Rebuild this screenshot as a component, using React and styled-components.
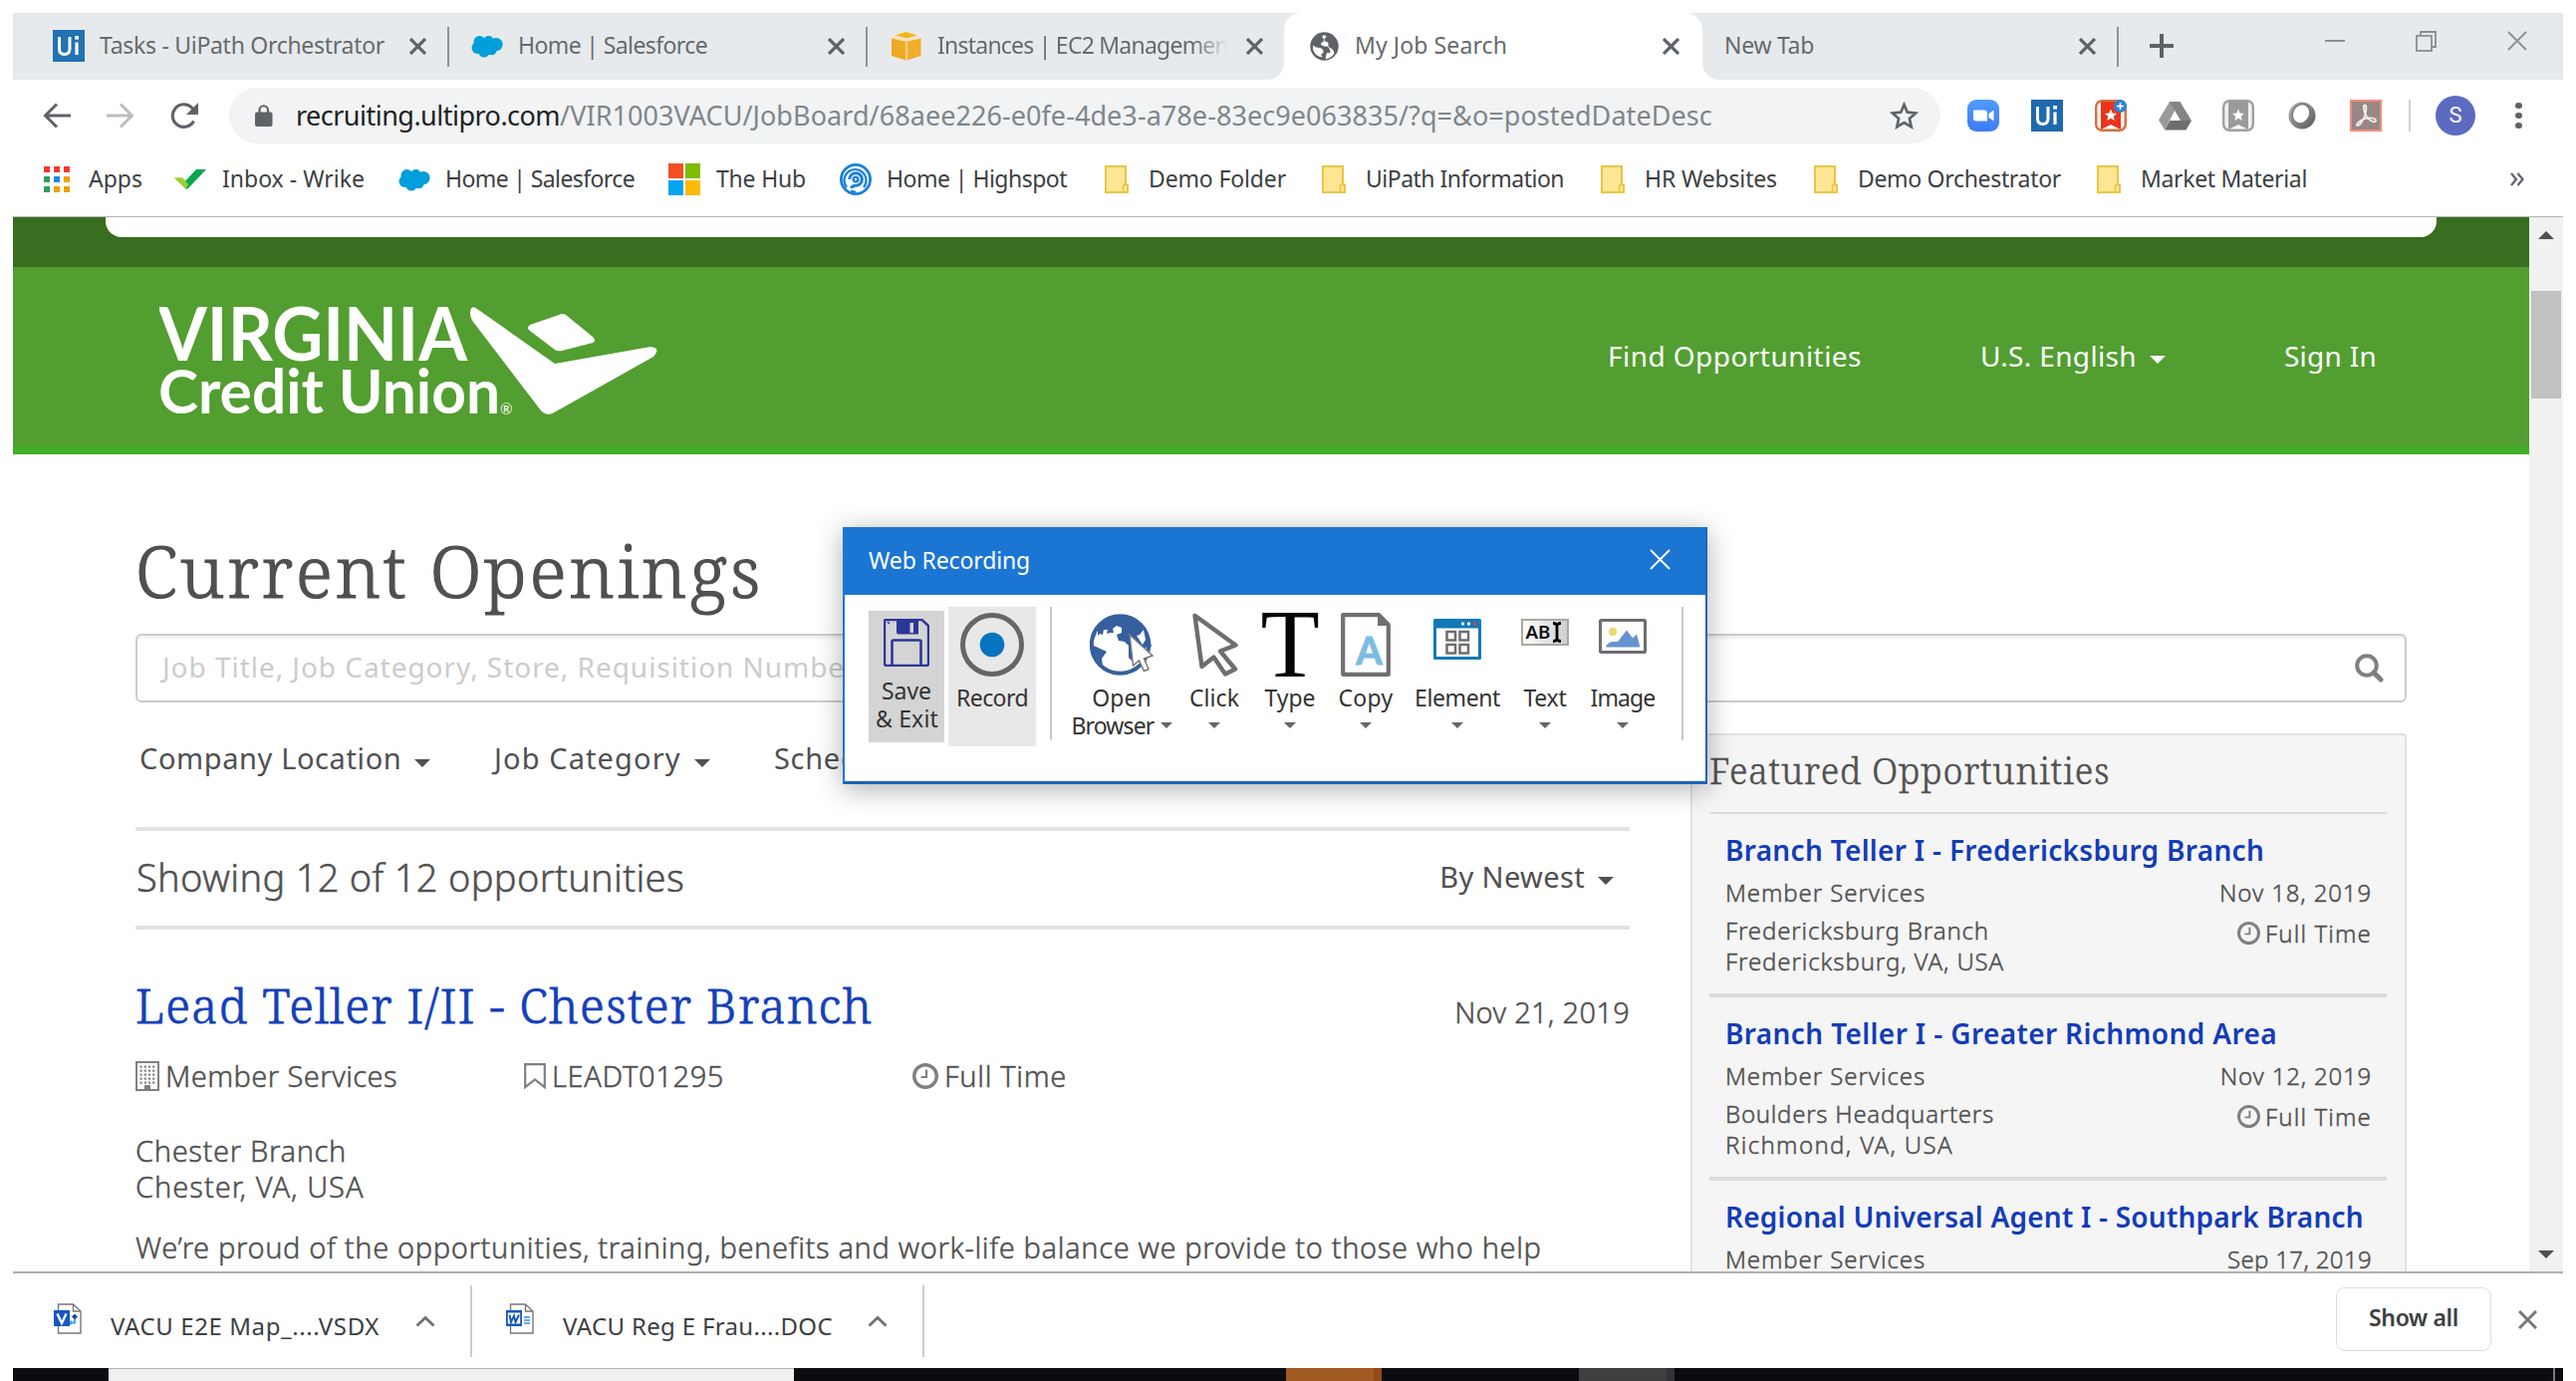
import React from 'react';
import styled, { createGlobalStyle, css } from 'styled-components';

const sans = '"Noto Sans", "Open Sans", sans-serif';
const slab = '"Noto Serif", "DejaVu Serif", serif';

const GlobalStyle = createGlobalStyle`
  *, *::before, *::after { box-sizing: border-box; }
  html, body { margin: 0; padding: 0; background: #fff; overflow: hidden; }
  svg { display: block; flex: none; }
`;

const Desktop = styled.div`
  position: relative;
  width: 2586px;
  height: 1386px;
  padding: 13px 13px 0;
  display: flex;
  flex-direction: column;
  overflow: hidden;
  background: #fff;
  font-family: ${sans};
  white-space: nowrap;
`;

const Label = styled.span`
  font-size: ${(p) => p.$size || 23}px;
  letter-spacing: ${(p) => p.$ls || 0}px;
`;

/* ---------- tab strip ---------- */

const TabStrip = styled.div`
  display: flex;
  height: 67px;
  flex: none;
`;

const TabGroup = styled.div`
  display: flex;
  background: #e6eaec;
  border-bottom-right-radius: ${(p) => (p.$side === 'left' ? 17 : 0)}px;
  border-bottom-left-radius: ${(p) => (p.$side === 'right' ? 17 : 0)}px;
  flex: ${(p) => (p.$side === 'right' ? 1 : 'none')};
`;

const TabBox = styled.div`
  display: flex;
  align-items: center;
  width: ${(p) => p.$width}px;
  padding: 0 ${(p) => p.$right}px 1px ${(p) => p.$left}px;
  color: #666a6d;
`;

const ActiveSlot = styled.div`
  background: #e6eaec;
  display: flex;
  > div {
    background: #fff;
    border-radius: 17px 17px 0 0;
  }
`;

const TabIcon = styled.div`
  width: 32px;
  display: flex;
  align-items: center;
  justify-content: center;
  margin-right: 15px;
`;

const TabTitle = styled(Label)`
  flex: 1;
  min-width: 0;
  overflow: hidden;
  padding-bottom: 2px;
  ${(p) =>
    p.$fade &&
    css`
      margin-right: 18px;
      mask-image: linear-gradient(to right, #000 88%, transparent 100%);
    `}
`;

const StripDivider = styled.div`
  width: 2px;
  height: 40px;
  margin: 14px 0 0 -2px;
  background: #8f9396;
  flex: none;
`;

const PlusSlot = styled.div`
  display: flex;
  align-items: center;
  padding: 0 0 1px 31px;
  flex: 1;
`;

const WindowControls = styled.div`
  display: flex;
  align-items: center;
  gap: 71px;
  padding: 0 36px 11px 0;
`;

/* ---------- address bar ---------- */

const Toolbar = styled.div`
  display: flex;
  align-items: center;
  height: 72px;
  flex: none;
  padding-left: 30px;
`;

const NavButtons = styled.div`
  display: flex;
  gap: 36px;
  width: 187px;
`;

const Omnibox = styled.div`
  display: flex;
  align-items: center;
  width: 1718px;
  height: 56px;
  border-radius: 28px;
  background: #f1f3f4;
  padding: 0 22px 0 26px;
`;

const Url = styled.div`
  flex: 1;
  margin-left: 23px;
  color: #80868b;
  padding-bottom: 1px;
`;

const Host = styled(Label)`
  color: #202124;
`;

const Extensions = styled.div`
  display: flex;
  align-items: center;
  gap: 32px;
  margin-left: 27px;
`;

const ExtSlot = styled.div`
  width: 32px;
  display: flex;
  justify-content: center;
`;

const ToolbarDivider = styled.div`
  width: 2px;
  height: 32px;
  margin: 0 25px 0 27px;
  background: #cfd1d3;
`;

const Avatar = styled.div`
  width: 40px;
  height: 40px;
  border-radius: 50%;
  background: #5c6bc0;
  color: #fff;
  font: 400 22px/40px Roboto, sans-serif;
  text-align: center;
`;

const MenuDots = styled.div`
  display: grid;
  gap: 3.4px;
  margin-left: 40px;
  i {
    width: 6.6px;
    height: 6.6px;
    border-radius: 50%;
    background: #5f6368;
  }
`;

/* ---------- bookmarks ---------- */

const BookmarkBar = styled.div`
  display: flex;
  align-items: flex-start;
  height: 66px;
  flex: none;
  padding-left: 31px;
  border-bottom: 1px solid #b4b4b4;
`;

const Bookmark = styled.div`
  display: flex;
  align-items: center;
  height: 56px;
  width: ${(p) => p.$slot}px;
  gap: ${(p) => p.$gap}px;
  color: #3c4043;
  ${Label} {
    padding-bottom: 2px;
  }
`;

const Overflow = styled.div`
  display: flex;
  align-items: center;
  height: 56px;
  margin-left: auto;
  padding-right: 39px;
`;

/* ---------- page ---------- */

const Viewport = styled.div`
  display: flex;
  height: 1058px;
  flex: none;
  overflow: hidden;
`;

const Page = styled.div`
  width: 2526px;
  flex: none;
`;

const DarkBand = styled.div`
  height: 50px;
  background: #396e20;
  padding-left: 93px;
`;

const BandCard = styled.div`
  width: 2340px;
  height: 20px;
  background: #fff;
  border-radius: 0 0 16px 16px;
`;

const SiteHeader = styled.header`
  display: flex;
  align-items: center;
  justify-content: space-between;
  height: 188px;
  padding: 0 153px 0 147px;
  background: #529e30;
  border-bottom: 8px solid #41ae2b;
  > svg { margin-top: 8px; }
`;

const SiteNav = styled.nav`
  display: flex;
  align-items: center;
  gap: 119px;
  color: #fff;
  padding-bottom: 3px;
`;

const DropLabel = styled.div`
  display: flex;
  align-items: center;
  gap: ${(p) => p.$gap || 13}px;
`;

const Triangle = styled.i`
  width: 0;
  height: 0;
  border: solid transparent;
  border-width: ${(p) => p.$h || 8}px ${(p) => (p.$w || 16) / 2}px 0;
  border-top-color: ${(p) => p.$color || '#505050'};
  margin-top: ${(p) => (p.$drop === undefined ? 9 : p.$drop)}px;
`;

const Main = styled.main`
  padding: 60px 123px 0;
`;

const PageTitle = styled.h1`
  margin: 0;
  height: 120px;
  font: 300 72px/113px ${slab};
  letter-spacing: 2.65px;
  color: #505050;
  -webkit-text-stroke: 1.2px #505050;
`;

const SearchBox = styled.div`
  display: flex;
  align-items: center;
  justify-content: space-between;
  height: 69px;
  padding: 0 21px 0 25px;
  border: 2px solid #ccc;
  border-radius: 6px;
  box-shadow: inset 0 3px 3px rgba(0, 0, 0, 0.06);
  color: #ccc;
  ${Label} {
    padding-bottom: 3px;
  }
`;

const Columns = styled.div`
  display: flex;
  gap: 61px;
  align-items: flex-start;
`;

const Listing = styled.section`
  width: 1500px;
  color: #505050;
`;

const Filters = styled.div`
  display: flex;
  height: 125px;
  padding: 40px 0 0 4px;
  line-height: 32px;
  align-items: flex-start;
`;

const Filter = styled(DropLabel)`
  width: ${(p) => p.$slot}px;
`;

const ResultBar = styled.div`
  display: flex;
  align-items: center;
  justify-content: space-between;
  height: 103px;
  padding: 0 16px 4px 1px;
  border: solid #e2e2e2;
  border-width: 4px 0;
`;

const LightText = styled(Label)`
  font-weight: 300;
  -webkit-text-stroke: 0.45px currentColor;
`;

const JobHead = styled.div`
  display: flex;
  align-items: baseline;
  justify-content: space-between;
  margin-top: 53px;
  height: 46px;
  line-height: 46px;
`;

const JobTitle = styled.a`
  font: 300 48px/46px ${slab};
  letter-spacing: 1.33px;
  color: #133fb9;
  -webkit-text-stroke: 0.8px #133fb9;
`;

const MetaRow = styled.div`
  display: grid;
  grid-template-columns: 390px 390px 1fr;
  margin-top: 32px;
  height: 32px;
  line-height: 32px;
`;

const Meta = styled.div`
  display: flex;
  align-items: center;
  gap: 6px;
`;

const Place = styled.div`
  display: flex;
  flex-direction: column;
  margin-top: 41px;
  line-height: 36px;
`;

const Summary = styled.p`
  display: flex;
  margin: 25px 0 0;
  line-height: 36px;
`;

/* ---------- featured ---------- */

const Featured = styled.aside`
  width: 719px;
  height: 600px;
  margin-top: 31px;
  padding: 0 18px 0 17px;
  background: #f5f5f5;
  border: 2px solid #e2e2e2;
  border-radius: 4px;
  color: #505050;
`;

const FeaturedTitle = styled.h2`
  margin: 0;
  height: 79px;
  font: 300 36px/72px ${slab};
  letter-spacing: 0.8px;
  -webkit-text-stroke: 0.5px #505050;
  border-bottom: 2px solid #dcdcdc;
`;

const FeaturedJob = styled.article`
  height: 184px;
  padding: 19px 15px 0 16px;
  border-bottom: 4px solid #dcdcdc;
`;

const FeaturedLink = styled.a`
  display: block;
  font-size: 28px;
  font-weight: 600;
  line-height: 34px;
  letter-spacing: ${(p) => p.$ls}px;
  color: #133cb8;
`;

const FeaturedRow = styled.div`
  display: flex;
  justify-content: space-between;
  line-height: ${(p) => (p.$tall ? 31 : 32)}px;
  margin-top: ${(p) => (p.$tall ? 6 : 10)}px;
`;

const FeaturedPlace = styled.div`
  display: flex;
  flex-direction: column;
`;

const FeaturedTime = styled.div`
  display: flex;
  align-items: center;
  gap: 5px;
  height: 31px;
  margin-top: 3px;
`;

/* ---------- scrollbar ---------- */

const Scrollbar = styled.div`
  display: flex;
  flex-direction: column;
  align-items: center;
  width: 34px;
  background: #f1f1f1;
  padding: 14px 0 13px;
`;

const ScrollArrow = styled.i`
  border: solid transparent;
  border-width: ${(p) => (p.$up ? '0 8px 8px' : '8px 8px 0')};
  border-bottom-color: ${(p) => (p.$up ? '#505050' : 'transparent')};
  border-top-color: ${(p) => (p.$up ? 'transparent' : '#505050')};
`;

const Thumb = styled.div`
  width: 30px;
  height: 108px;
  margin: 52px 0 auto;
  background: #c1c1c1;
`;

/* ---------- downloads ---------- */

const DownloadBar = styled.div`
  display: flex;
  align-items: center;
  height: 97px;
  flex: none;
  border-top: 2px solid #b1b0b2;
`;

const Download = styled.div`
  display: flex;
  align-items: center;
  width: ${(p) => p.$width}px;
  height: 72px;
  padding: 0 35px 0 ${(p) => p.$left}px;
  border-right: 2px solid #cccccc;
  color: #3c4043;
  ${Label} {
    flex: 1;
    margin-left: 29px;
    padding-top: 9px;
  }
`;

const FileIcon = styled.div`
  margin-top: -4px;
`;

const ShowAll = styled.button`
  width: 156px;
  height: 64px;
  margin: 0 27px 3px auto;
  padding: 0 0 3px;
  background: #fff;
  border: 1.5px solid #dadce0;
  border-radius: 9px;
  font: 600 23px/1 ${sans};
  letter-spacing: -0.33px;
  color: #3c4043;
`;

const BarClose = styled.div`
  padding: 0 26px 3px 0;
`;

const Taskbar = styled.div`
  display: flex;
  height: 13px;
  flex: none;
  background: #0a0c10;
`;

const TaskItem = styled.div`
  width: ${(p) => p.$width}px;
  margin-left: ${(p) => p.$gap}px;
  background: ${(p) => p.$bg};
  border-right: ${(p) => p.$edge || 'none'};
  border-top: ${(p) => p.$top || 'none'};
`;

/* ---------- recorder dialog ---------- */

const Dialog = styled.div`
  position: absolute;
  left: 846px;
  top: 529px;
  width: 868px;
  height: 258px;
  background: #fff;
  border: 2px solid #1766ba;
  border-left-color: #1b76d3;
  border-top-color: #1b76d3;
  border-bottom-width: 3px;
  box-shadow: 0 5px 26px rgba(0, 0, 0, 0.32);
`;

const DialogBar = styled.div`
  display: flex;
  align-items: center;
  justify-content: space-between;
  height: 66px;
  padding: 0 35px 5px 24px;
  background: #1b76d3;
  color: #fff;
`;

const Tools = styled.div`
  display: flex;
  align-items: flex-start;
  padding: 12px 0 0 24px;
  color: #333;
`;

const Tool = styled.div`
  display: flex;
  flex-direction: column;
  align-items: center;
  width: ${(p) => p.$width}px;
  padding-top: 6px;
  line-height: 28px;
`;

const RecordTool = styled(Tool)`
  height: 140px;
  background: #e8e8e8;
`;

const SaveTool = styled(Tool)`
  height: 132px;
  margin: 4px 4px 0 0;
  padding-top: 8px;
  background: #d4d4d4;
  svg { margin-bottom: 10px; }
  span + span { margin-left: 1px; }
`;

const ToolIcon = styled.div`
  height: 71px;
  padding-top: ${(p) => (p.$small ? 6 : 0)}px;
`;

const ToolArrow = styled.div`
  display: flex;
  align-items: center;
  gap: 6px;
  height: 28px;
`;

const ToolDivider = styled.div`
  width: 2px;
  height: 134px;
  margin: 0 ${(p) => p.$after || 0}px 0 ${(p) => p.$before}px;
  background: #c8c8c8;
`;

/* ---------- icons ---------- */

const Cross = ({ size = 17, w = 3.2, color = '#5f6368' }) => (
  <svg width={size} height={size} viewBox={`0 0 ${size} ${size}`}>
    <path d={`M1 1L${size - 1} ${size - 1}M${size - 1} 1L1 ${size - 1}`} stroke={color} strokeWidth={w} fill="none" />
  </svg>
);

const UiIcon = ({ bg = '#2272b4' }) => (
  <svg width="32" height="32" viewBox="0 0 32 32">
    <rect width="32" height="32" fill={bg} />
    <path d="M6.5 7v12q0 5.5 5.2 5.5T17 19V7" fill="none" stroke="#fff" strokeWidth="3" />
    <path d="M24 12.5v12.5" stroke="#fff" strokeWidth="3.2" />
    <rect x="22.2" y="6" width="3.8" height="3.6" fill="#fff" />
  </svg>
);

const Cloud = () => (
  <svg width="32" height="23" viewBox="0 0 32 23">
    <g fill="#009edb">
      <circle cx="8.5" cy="7" r="6" />
      <circle cx="17.5" cy="6" r="5" />
      <circle cx="25" cy="9.5" r="6.6" />
      <circle cx="6.5" cy="13" r="6" />
      <circle cx="13" cy="17" r="5.6" />
      <circle cx="20.5" cy="15" r="5.2" />
      <rect x="8" y="6" width="14" height="10" />
    </g>
  </svg>
);

const Cube = () => (
  <svg width="30" height="29" viewBox="0 0 30 29">
    <path d="M0 6L14.5 9v19.5L0 24z" fill="#efa922" />
    <path d="M29.5 6L15.5 9v19.5L29.5 24z" fill="#f0ae2b" />
    <path d="M4 3.5L14.5 0 26 3.5 15 6.5z" fill="#f7b50c" />
    <path d="M0 5.5L15 9l14.5-3.5" fill="none" stroke="#f8e2b4" strokeWidth="2" />
    <path d="M15 9v19.5" stroke="#f5cf85" strokeWidth="2.4" />
  </svg>
);

const Globe = () => (
  <svg width="29" height="29" viewBox="0 0 29 29">
    <circle cx="14.5" cy="14.5" r="14.2" fill="#5f6368" />
    <path d="M3 13.500q3 2.500 7 2.500 3 .5 3.500 3t-1.500 3 1 3.500q-8-.500-10-8.500z" fill="#fff" />
    <path d="M13 3.500q-1.500 2.500 1 3.500t-1 3 -1 3.500 4.500 1 3.500 3.500-1 3-3 3.500-.500 3q5-1 7.500-4 2-1.500 1-4t-3.500-3.500-2-3.500-3-3 0-3.500-3.500-2.500z" fill="#fff" />
  </svg>
);

const Arrow = ({ color, flip }) => (
  <svg width="28" height="26" viewBox="0 0 28 26">
    <path
      d={flip ? 'M0 13h25M14 1.500L25.500 13 14 24.500' : 'M28 13H3M14 1.500L2.500 13 14 24.500'}
      fill="none" stroke={color} strokeWidth="3"
    />
  </svg>
);

const Reload = () => (
  <svg width="28" height="26" viewBox="0 0 28 26">
    <path d="M23.500 18.500A11.300 11.300 0 1 1 21.500 5l3 3" fill="none" stroke="#5f6368" strokeWidth="3.100" />
    <path d="M28 0v12H16z" fill="#5f6368" />
  </svg>
);

const Lock = () => (
  <svg width="18" height="22" viewBox="0 0 18 22">
    <rect y="7.500" width="17.500" height="14.500" rx="2" fill="#5f6368" />
    <path d="M4.500 9V5.500a4.200 4.200 0 0 1 8.500 0V9" fill="none" stroke="#5f6368" strokeWidth="2.200" />
  </svg>
);

const Star = () => (
  <svg width="29" height="28" viewBox="0 0 29 28">
    <path d="M14.500 3l3.300 7.700 8.400.8-6.300 5.600 1.800 8.200-7.200-4.300-7.200 4.300 1.800-8.200-6.300-5.600 8.400-.8z" fill="none" stroke="#5f6368" strokeWidth="2.700" />
  </svg>
);

const ZoomIcon = () => (
  <svg width="32" height="32" viewBox="0 0 32 32">
    <defs>
      <linearGradient id="zoomBg" x1="0" y1="0" x2="0" y2="1"><stop offset="0" stopColor="#4f9cff" /><stop offset="1" stopColor="#3f7cf6" /></linearGradient>
    </defs>
    <rect width="32" height="32" rx="9" fill="url(#zoomBg)" />
    <path d="M6 10.500h11q3 0 3 3V21.500H9q-3 0-3-3z" fill="#fff" />
    <path d="M21.500 14l5-3.500v11l-5-3.500z" fill="#fff" />
  </svg>
);

const ListIcon = ({ body, edge, badge }) => (
  <svg width="32" height="32" viewBox="0 0 32 32">
    <rect x="1.200" y="1.200" width="29.600" height="29.600" rx="6" fill="#f7f1ec" stroke={edge} strokeWidth="2.400" />
    <path d="M6 2h20v28l-10-5-10 5z" fill={body} />
    <path d="M10 29l6-2.800 6 2.800z" fill="#fff" />
    <path d="M16 9.500l1.700 4 4.300.4-3.200 2.900.9 4.200-3.700-2.200-3.700 2.200.9-4.200L10 13.900l4.300-.4z" fill="#fff" />
    {badge && (
      <g>
        <circle cx="25.500" cy="6.500" r="6.500" fill="#2b83d8" />
        <path d="M22 6.500h7M25.500 3v7" stroke="#fff" strokeWidth="1.600" />
      </g>
    )}
  </svg>
);

const Drive = () => (
  <svg width="33" height="29" viewBox="0 0 33 29">
    <path d="M11 0h10.500L16 9.500 6 28 0 18.500z" fill="#9a9a9a" />
    <path d="M11 0h10.500l11.500 19H22z" fill="#858585" />
    <path d="M11.200 19H33l-5.500 9.500H6z" fill="#6e6e6e" />
    <path d="M16.500 10.500l5 8.500H11.500z" fill="#fff" />
  </svg>
);

const Ring = () => (
  <svg width="30" height="30" viewBox="0 0 30 30">
    <defs>
      <linearGradient id="ringFill" x1="0" y1="0" x2="1" y2="1"><stop offset="0" stopColor="#b8b8b8" /><stop offset="1" stopColor="#555" /></linearGradient>
    </defs>
    <circle cx="15" cy="15" r="13.500" fill="url(#ringFill)" />
    <ellipse cx="14.500" cy="13.500" rx="8" ry="9.500" fill="#fff" transform="rotate(25 14 13)" />
    <ellipse cx="14" cy="13" rx="8.500" ry="10" fill="none" stroke="#777" strokeWidth="1.200" transform="rotate(25 14 13)" />
  </svg>
);

const Pdf = () => (
  <svg width="32" height="32" viewBox="0 0 32 32">
    <rect x="1" y="1" width="30" height="30" fill="#978885" stroke="#f58a7c" strokeWidth="2" />
    <path d="M15 5.500c2 0 1.500 5 .5 9-1.500 6-6 12-8 11.500s2-5.500 8-7 11.500 0 10.500 2.500-7-1-9.500-5-3.500-11-1.500-11z" fill="none" stroke="#f4efee" strokeWidth="1.800" />
  </svg>
);

const AppsGrid = () => (
  <svg width="26" height="26" viewBox="0 0 26 26">
    {['#f23a30', '#f23a30', '#f23a30', '#2e9e58', '#1a86f2', '#f0a000', '#2e9e58', '#f0a000', '#f0a000'].map((c, i) => (
      <rect key={i} x={(i % 3) * 10} y={Math.floor(i / 3) * 10} width="6" height="6" fill={c} />
    ))}
  </svg>
);

const Check = () => (
  <svg width="32" height="20" viewBox="0 0 32 20">
    <path d="M0 8.500h8L16 15l-4 5z" fill="#9fcf36" />
    <path d="M22 0h10L13 20 9 14z" fill="#08a850" />
    <path d="M0 8.500h8l6 6.500-2.500 5z" fill="#9fcf36" />
  </svg>
);

const Squares = () => (
  <svg width="32" height="32" viewBox="0 0 32 32">
    <rect width="15" height="15" fill="#f35022" /><rect x="17" width="15" height="15" fill="#80bb02" />
    <rect y="17" width="15" height="15" fill="#05a5ef" /><rect x="17" y="17" width="15" height="15" fill="#ffba07" />
  </svg>
);

const Highspot = () => (
  <svg width="32" height="32" viewBox="0 0 32 32" fill="none" stroke="#1a80db">
    <circle cx="16" cy="16" r="14.600" strokeWidth="2.800" />
    <path d="M7 24A11 11 0 1 1 24 24M11 27.500q2.500 1.200 5 1.200" strokeWidth="2.200" />
    <path d="M9.800 16A6.300 6.300 0 1 1 16 22.300q-3.500 0-4.500 2.700" strokeWidth="3" />
    <circle cx="16" cy="16" r="2.400" strokeWidth="2.400" />
  </svg>
);

const Folder = () => (
  <svg width="24" height="28" viewBox="0 0 24 28">
    <path d="M1 1h20v18.500h2V27H1z" fill="#ffe694" stroke="#eac545" strokeWidth="2" />
    <path d="M18.500 26v-5q0-2 2.200-2" fill="none" stroke="#eac545" strokeWidth="1.600" />
  </svg>
);

const Logo = () => (
  <svg width="504" height="120" viewBox="0 0 504 120">
    <g fill="#fff" fontFamily="Lato, sans-serif" fontWeight="700">
      <text x="-1" y="60" fontSize="74" textLength="310" lengthAdjust="spacingAndGlyphs">VIRGINIA</text>
      <text x="-1" y="113" fontSize="61" textLength="343" lengthAdjust="spacingAndGlyphs">Credit Union</text>
      <text x="342" y="114" fontSize="15" fontWeight="400">®</text>
    </g>
    <path d="M312 13q0-10 7-5L397 63 493 46q11 1 3 10L398 111q-8 6-15-1L315 21q-3-4-3-8z" fill="#fff" />
    <path d="M372 24q-4 3 0 6l25 19q3 2 7 1l31-8q4-2 0-6l-27-22q-3-2-7 0z" fill="#fff" />
  </svg>
);

const Search = () => (
  <svg width="29" height="29" viewBox="0 0 29 29" fill="none" stroke="#808080">
    <circle cx="12" cy="12" r="9.800" strokeWidth="4" />
    <path d="M19 19l7 7" strokeWidth="5" strokeLinecap="round" />
  </svg>
);

const Building = () => (
  <svg width="24" height="30" viewBox="0 0 24 30">
    <rect x="1" y="1" width="22" height="28" fill="none" stroke="#808080" strokeWidth="2" />
    {[0, 1, 2, 3, 4].map((r) => [0, 1, 2, 3].map((c) => (
      <rect key={`${r}-${c}`} x={4.500 + c * 4.200} y={4.500 + r * 4} width="2.200" height="2.200" fill="#808080" />
    )))}
    <rect x="9" y="24" width="6" height="5" fill="#808080" />
  </svg>
);

const Ribbon = () => (
  <svg width="22" height="26" viewBox="0 0 22 26">
    <path d="M1.200 1.200h19.600v23L11 16.500 1.200 24.200z" fill="none" stroke="#808080" strokeWidth="2.200" />
  </svg>
);

const Clock = ({ size = 26 }) => (
  <svg width={size} height={size} viewBox="0 0 26 26" fill="none" stroke="#808080">
    <circle cx="13" cy="13" r="11.300" strokeWidth="3.400" />
    <path d="M14 6.500V14H8.500" strokeWidth="2.200" />
  </svg>
);

const VisioFile = () => (
  <svg width="28" height="31" viewBox="0 0 28 31">
    <path d="M4.500 1h15L27 8v22H4.500z" fill="#fff" stroke="#777" strokeWidth="1.400" />
    <path d="M19.500 1v7H27" fill="none" stroke="#777" strokeWidth="1.400" />
    <rect y="7" width="16" height="16" fill="#1757bd" />
    <path d="M3.500 10.500L8 20l4.500-9.500" fill="none" stroke="#fff" strokeWidth="2.400" />
    <path d="M21 10.500l3 3-3 3-3-3z" fill="#1747a5" />
    <path d="M21 16v3.500h-4M17 17.500v4" fill="none" stroke="#3a9af0" strokeWidth="1.800" />
  </svg>
);

const WordFile = () => (
  <svg width="28" height="31" viewBox="0 0 28 31">
    <path d="M4.500 1h15L27 8v22H4.500z" fill="#fff" stroke="#777" strokeWidth="1.400" />
    <path d="M19.500 1v7H27" fill="none" stroke="#777" strokeWidth="1.400" />
    <rect y="7" width="16" height="16" fill="#1757bd" />
    <rect x="1.800" y="9.500" width="12.400" height="11" fill="#fff" />
    <path d="M3.500 11.500l1.500 7.500 3-6.500 1.500 6.500 3.500-7.500" fill="none" stroke="#1757bd" strokeWidth="1.900" />
    <path d="M18 14h6M18 17h6M18 20h6" stroke="#2f8df0" strokeWidth="1.400" />
  </svg>
);

const Chevron = () => (
  <svg width="20" height="12" viewBox="0 0 20 12">
    <path d="M1.500 10.500L10 2.500l8.500 8" fill="none" stroke="#6f7478" strokeWidth="3" />
  </svg>
);

const Floppy = () => (
  <svg width="46" height="48" viewBox="0 0 46 48">
    <path d="M2.500 1h36L45 7v38q0 2-2 2H3q-2 0-2-2V2.500Q1 1 2.500 1z" fill="none" stroke="#2b3796" strokeWidth="2.400" />
    <path d="M13 1h22v14.500H15q-2 0-2-2z" fill="#2b3796" />
    <rect x="26.500" y="4" width="3.500" height="10" fill="#d4d4d4" />
    <path d="M8.500 47V23q0-1.500 1.500-1.500h26q1.500 0 1.500 1.500v24" fill="none" stroke="#2b3796" strokeWidth="2.600" />
    <path d="M4 3l2 2" stroke="#2b3796" strokeWidth="1.500" />
  </svg>
);

const RecordDot = () => (
  <svg width="64" height="64" viewBox="0 0 64 64">
    <circle cx="32" cy="32" r="29.500" fill="none" stroke="#666" strokeWidth="5" />
    <circle cx="32" cy="32" r="12.300" fill="#0774c2" />
  </svg>
);

const GlobeCursor = () => (
  <svg width="64" height="64" viewBox="0 0 64 64">
    <circle cx="30.500" cy="32" r="28.700" fill="#fff" stroke="#365f9f" strokeWidth="4" />
    <path d="M3 30L8 17v6l2-2 3 1 1-5 4 0-1 4 4-1 3 0-1-4 4-3 5 2 0 5-5 2 2 6 6 1 4 4 0 12 3 3 2-2 0-9 18-3Q58 4 30 3 6 6 3 30z" fill="#365f9f" />
    <path d="M47 23l3-1 4-5 2 10-3 5z" fill="#fff" />
    <path d="M4 33l13 6-5 7 1 7Q4 44 3 34z" fill="#365f9f" />
    <path d="M40 22l3.500 31 6-5 5 10.500 4.500-2-4.500-10.500 8.500-3z" fill="#fff" stroke="#777" strokeWidth="1.500" />
  </svg>
);

const Cursor = () => (
  <svg width="47" height="64" viewBox="0 0 47 64">
    <path d="M3.500 2.700L44.500 32.500 29 38.500l15 18L34 61.500 22.500 44.500 10.500 54z" fill="#fff" stroke="#6d6e71" strokeWidth="4.400" strokeLinejoin="round" />
  </svg>
);

const TypeGlyph = () => (
  <svg width="58" height="64" viewBox="0 0 58 64">
    <text x="29" y="63.500" textAnchor="middle" fontFamily="Liberation Serif, serif" fontSize="97" fill="#060606">T</text>
  </svg>
);

const CopyPage = () => (
  <svg width="50" height="64" viewBox="0 0 50 64">
    <path d="M2.200 2.200h36L47.800 12v49.800H2.200z" fill="#fff" stroke="#6d706f" strokeWidth="4.200" strokeLinejoin="round" />
    <path d="M37 1l12 12H37z" fill="#6d706f" />
    <text x="28.500" y="52" textAnchor="middle" fontFamily="Lato, sans-serif" fontWeight="700" fontSize="38" fill="#7bbde3" stroke="#7bbde3">A</text>
  </svg>
);

const ElementIcon = () => (
  <svg width="48" height="41" viewBox="0 0 48 41">
    <rect width="48" height="41" rx="1.500" fill="#107ab8" />
    <rect x="3" y="9.500" width="42" height="28.500" fill="#fff" />
    <circle cx="29.500" cy="5" r="1.700" fill="#fff" /><circle cx="35.500" cy="5" r="1.700" fill="#fff" /><circle cx="41.500" cy="5" r="1.700" fill="#ee3a50" />
    <g fill="#fff" stroke="#6d6e71" strokeWidth="2.500">
      <rect x="13.500" y="13" width="8.500" height="8.500" /><rect x="26.500" y="13" width="8.500" height="8.500" />
      <rect x="13.500" y="26" width="8.500" height="8.500" /><rect x="26.500" y="26" width="8.500" height="8.500" />
    </g>
  </svg>
);

const TextIcon = () => (
  <svg width="48" height="27" viewBox="0 0 48 27">
    <defs>
      <linearGradient id="fieldBg" x1="0" x2="1"><stop offset="0" stopColor="#fff" /><stop offset="1" stopColor="#cfcfd2" /></linearGradient>
    </defs>
    <rect x="1" y="1" width="46" height="25" fill="url(#fieldBg)" stroke="#a9a9a0" strokeWidth="2" />
    <text x="4.500" y="20" fontFamily="Noto Sans, sans-serif" fontWeight="600" fontSize="18.500" textLength="25" lengthAdjust="spacingAndGlyphs" fill="#111">AB</text>
    <path d="M32 4.500q3.500 0 4 2.500.5-2.500 4-2.500M36 6.500v14M32 22.500q3.500 0 4-2.500.5 2.500 4 2.500" fill="none" stroke="#000" strokeWidth="2.800" />
  </svg>
);

const ImageIcon = () => (
  <svg width="48" height="35" viewBox="0 0 48 35">
    <rect x="1.500" y="1.500" width="45" height="32" rx="1" fill="#fff" stroke="#6d6e71" strokeWidth="3" />
    <circle cx="14" cy="13" r="4.200" fill="#efd873" />
    <path d="M7 28.500q2-5.500 8-5.500h4l9-11.500 6 8 4-4 3.500 13z" fill="#6692cf" />
  </svg>
);

/* ---------- data ---------- */

const bookmarks = [
  { icon: <AppsGrid />, label: 'Apps', slot: 131, gap: 19, ls: 0 },
  { icon: <Check />, label: 'Inbox - Wrike', slot: 225, gap: 16, ls: 0 },
  { icon: <Cloud />, label: 'Home | Salesforce', slot: 271, gap: 15, ls: -0.61 },
  { icon: <Squares />, label: 'The Hub', slot: 172, gap: 16, ls: -0.19 },
  { icon: <Highspot />, label: 'Home | Highspot', slot: 266, gap: 15, ls: -0.52 },
  { icon: <Folder />, label: 'Demo Folder', slot: 218, gap: 20, ls: -0.14 },
  { icon: <Folder />, label: 'UiPath Information', slot: 280, gap: 20, ls: -0.51 },
  { icon: <Folder />, label: 'HR Websites', slot: 214, gap: 20, ls: -0.15 },
  { icon: <Folder />, label: 'Demo Orchestrator', slot: 284, gap: 20, ls: -0.32 },
  { icon: <Folder />, label: 'Market Material', slot: 230, gap: 20, ls: -0.34 },
];

const featured = [
  {
    title: 'Branch Teller I - Fredericksburg Branch', ls: 0.31, date: 'Nov 18, 2019', dateLs: 0.87,
    site: 'Fredericksburg Branch', siteLs: 0.85, city: 'Fredericksburg, VA, USA', cityLs: 0.88,
  },
  {
    title: 'Branch Teller I - Greater Richmond Area', ls: 0.38, date: 'Nov 12, 2019', dateLs: 0.8,
    site: 'Boulders Headquarters', siteLs: 0.72, city: 'Richmond, VA, USA', cityLs: 1.35,
  },
  { title: 'Regional Universal Agent I - Southpark Branch', ls: 0.21, date: 'Sep 17, 2019', dateLs: 0.35 },
];

const tools = [
  { icon: <Cursor />, label: 'Click', width: 80, ls: 0.05 },
  { icon: <TypeGlyph />, label: 'Type', width: 72, ls: -0.05 },
  { icon: <CopyPage />, label: 'Copy', width: 80, ls: 0.28 },
  { icon: <ElementIcon />, label: 'Element', width: 104, ls: -0.39, small: true },
  { icon: <TextIcon />, label: 'Text', width: 72, ls: -0.29, small: true },
  { icon: <ImageIcon />, label: 'Image', width: 84, ls: -0.87, small: true },
];

const Tab = ({ icon, title, ls, width, left, right = 21, fade }) => (
  <TabBox $width={width} $left={left} $right={right}>
    {icon && <TabIcon>{icon}</TabIcon>}
    <TabTitle $ls={ls} $fade={fade}>{title}</TabTitle>
    <Cross />
  </TabBox>
);

export default function App() {
  return (
    <Desktop>
      <GlobalStyle />

      <TabStrip>
        <TabGroup $side="left">
          <Tab icon={<UiIcon />} title="Tasks - UiPath Orchestrator" ls={-0.29} width={438} left={40} right={23} />
          <StripDivider />
          <Tab icon={<Cloud />} title="Home | Salesforce" ls={-0.61} width={420} left={22} right={23} />
          <StripDivider />
          <Tab icon={<Cube />} title="Instances | EC2 Management" ls={-0.77} width={418} left={23} right={21} fade />
        </TabGroup>
        <ActiveSlot>
          <Tab icon={<Globe />} title="My Job Search" ls={0.1} width={420} left={24} right={23} />
        </ActiveSlot>
        <TabGroup $side="right">
          <Tab title="New Tab" ls={-0.29} width={418} left={22} right={23} />
          <StripDivider />
          <PlusSlot>
            <svg width="24" height="24" viewBox="0 0 24 24"><path d="M0 12h24M12 0v24" stroke="#5f6368" strokeWidth="4" /></svg>
          </PlusSlot>
          <WindowControls>
            <svg width="20" height="20" viewBox="0 0 20 20"><path d="M0 10h20" stroke="#8c8f91" strokeWidth="2" /></svg>
            <svg width="21" height="21" viewBox="0 0 21 21" fill="none" stroke="#8c8f91" strokeWidth="1.800">
              <rect x="1" y="5" width="15" height="15" /><path d="M5 5V1h15v15h-4" />
            </svg>
            <Cross size={20} w={1.8} color="#8c8f91" />
          </WindowControls>
        </TabGroup>
      </TabStrip>

      <Toolbar>
        <NavButtons>
          <Arrow color="#5f6368" />
          <Arrow color="#bcbdbf" flip />
          <Reload />
        </NavButtons>
        <Omnibox>
          <Lock />
          <Url>
            <Host $size={27} $ls={-0.52}>recruiting.ultipro.com</Host>
            <Label $size={27} $ls={0.06}>/VIR1003VACU/JobBoard/68aee226-e0fe-4de3-a78e-83ec9e063835/?q=&amp;o=postedDateDesc</Label>
          </Url>
          <Star />
        </Omnibox>
        <Extensions>
          <ExtSlot><ZoomIcon /></ExtSlot>
          <ExtSlot><UiIcon bg="#1f69ae" /></ExtSlot>
          <ExtSlot><ListIcon body="#e8341c" edge="#d0743c" badge /></ExtSlot>
          <ExtSlot><Drive /></ExtSlot>
          <ExtSlot><ListIcon body="#9b9b9b" edge="#a0a0a0" /></ExtSlot>
          <ExtSlot><Ring /></ExtSlot>
          <ExtSlot><Pdf /></ExtSlot>
        </Extensions>
        <ToolbarDivider />
        <Avatar>S</Avatar>
        <MenuDots><i /><i /><i /></MenuDots>
      </Toolbar>

      <BookmarkBar>
        {bookmarks.map((b) => (
          <Bookmark key={b.label} $slot={b.slot} $gap={b.gap}>
            {b.icon}
            <Label $ls={b.ls}>{b.label}</Label>
          </Bookmark>
        ))}
        <Overflow>
          <svg width="14" height="14" viewBox="0 0 14 14"><path d="M1 1l5 6-5 6M7.500 1l5 6-5 6" fill="none" stroke="#5f6368" strokeWidth="2.200" /></svg>
        </Overflow>
      </BookmarkBar>

      <Viewport>
        <Page>
          <DarkBand><BandCard /></DarkBand>
          <SiteHeader>
            <Logo />
            <SiteNav>
              <Label $size={28} $ls={0.45}>Find Opportunities</Label>
              <DropLabel>
                <Label $size={28} $ls={0.35}>U.S. English</Label>
                <Triangle $color="#fff" />
              </DropLabel>
              <Label $size={28} $ls={0.26}>Sign In</Label>
            </SiteNav>
          </SiteHeader>

          <Main>
            <PageTitle>Current Openings</PageTitle>
            <SearchBox>
              <Label $size={28} $ls={0.96}>Job Title, Job Category, Store, Requisition Number</Label>
              <Search />
            </SearchBox>

            <Columns>
              <Listing>
                <Filters>
                  <Filter $slot={356}><Label $size={29} $ls={0.6}>Company Location</Label><Triangle /></Filter>
                  <Filter $slot={281}><Label $size={29} $ls={1.1}>Job Category</Label><Triangle /></Filter>
                  <Filter $slot={200}><Label $size={29} $ls={0.7}>Schedule</Label><Triangle /></Filter>
                </Filters>

                <ResultBar>
                  <LightText $size={38} $ls={0.31}>Showing 12 of 12 opportunities</LightText>
                  <DropLabel>
                    <Label $size={29} $ls={0.35}>By Newest</Label>
                    <Triangle />
                  </DropLabel>
                </ResultBar>

                <JobHead>
                  <JobTitle>Lead Teller I/II - Chester Branch</JobTitle>
                  <LightText $size={29} $ls={0.3}>Nov 21, 2019</LightText>
                </JobHead>
                <MetaRow>
                  <Meta><Building /><LightText $size={29} $ls={0.43}>Member Services</LightText></Meta>
                  <Meta><Ribbon /><LightText $size={29} $ls={0.65}>LEADT01295</LightText></Meta>
                  <Meta><Clock /><LightText $size={29} $ls={0.65}>Full Time</LightText></Meta>
                </MetaRow>
                <Place>
                  <LightText $size={29} $ls={0.65}>Chester Branch</LightText>
                  <LightText $size={29} $ls={1}>Chester, VA, USA</LightText>
                </Place>
                <Summary>
                  <LightText $size={29} $ls={0.63}>We’re proud of the opportunities, training, benefits and work-life balance we provide to those who help</LightText>
                </Summary>
              </Listing>

              <Featured>
                <FeaturedTitle>Featured Opportunities</FeaturedTitle>
                {featured.map((job) => (
                  <FeaturedJob key={job.title}>
                    <FeaturedLink $ls={job.ls}>{job.title}</FeaturedLink>
                    <FeaturedRow>
                      <LightText $size={24} $ls={0.9}>Member Services</LightText>
                      <LightText $size={24} $ls={job.dateLs}>{job.date}</LightText>
                    </FeaturedRow>
                    {job.site && (
                      <FeaturedRow $tall>
                        <FeaturedPlace>
                          <LightText $size={24} $ls={job.siteLs}>{job.site}</LightText>
                          <LightText $size={24} $ls={job.cityLs}>{job.city}</LightText>
                        </FeaturedPlace>
                        <FeaturedTime>
                          <Clock size={23} />
                          <LightText $size={24} $ls={1.12}>Full Time</LightText>
                        </FeaturedTime>
                      </FeaturedRow>
                    )}
                  </FeaturedJob>
                ))}
              </Featured>
            </Columns>
          </Main>
        </Page>
        <Scrollbar>
          <ScrollArrow $up />
          <Thumb />
          <ScrollArrow />
        </Scrollbar>
      </Viewport>

      <DownloadBar>
        <Download $width={461} $left={41}>
          <FileIcon><VisioFile /></FileIcon>
          <Label $size={24} $ls={0.59}>VACU E2E Map_....VSDX</Label>
          <Chevron />
        </Download>
        <Download $width={454} $left={34}>
          <FileIcon><WordFile /></FileIcon>
          <Label $size={24} $ls={0.33}>VACU Reg E Frau....DOC</Label>
          <Chevron />
        </Download>
        <ShowAll>Show all</ShowAll>
        <BarClose><Cross size={19} w={3} color="#74787c" /></BarClose>
      </DownloadBar>

      <Taskbar>
        <TaskItem $gap={96} $width={688} $bg="#f0f0f0" $top="1px solid #b4b4b4" />
        <TaskItem $gap={494} $width={96} $bg="#a05a22" $edge="8px solid #944a16" />
        <TaskItem $gap={198} $width={96} $bg="#3f3f42" $edge="8px solid #333336" />
        <TaskItem $gap={882} $width={2} $bg="#77797c" />
      </Taskbar>

      <Dialog>
        <DialogBar>
          <Label $ls={-0.13}>Web Recording</Label>
          <Cross size={21} w={1.8} color="#fff" />
        </DialogBar>
        <Tools>
          <SaveTool $width={76}>
            <Floppy />
            <Label>Save</Label>
            <Label $ls={0.16}>&amp; Exit</Label>
          </SaveTool>
          <RecordTool $width={88}>
            <ToolIcon><RecordDot /></ToolIcon>
            <Label $ls={-0.57}>Record</Label>
          </RecordTool>
          <ToolDivider $before={14} $after={17} />
          <Tool $width={106}>
            <ToolIcon><GlobeCursor /></ToolIcon>
            <Label>Open</Label>
            <ToolArrow>
              <Label $ls={-0.86}>Browser</Label>
              <Triangle $w={13} $h={6.5} $drop={0} $color="#666" />
            </ToolArrow>
          </Tool>
          {tools.map((t) => (
            <Tool key={t.label} $width={t.width}>
              <ToolIcon $small={t.small}>{t.icon}</ToolIcon>
              <Label $ls={t.ls}>{t.label}</Label>
              <ToolArrow><Triangle $w={13} $h={6.5} $drop={0} $color="#666" /></ToolArrow>
            </Tool>
          ))}
          <ToolDivider $before={17} />
        </Tools>
      </Dialog>
    </Desktop>
  );
}
